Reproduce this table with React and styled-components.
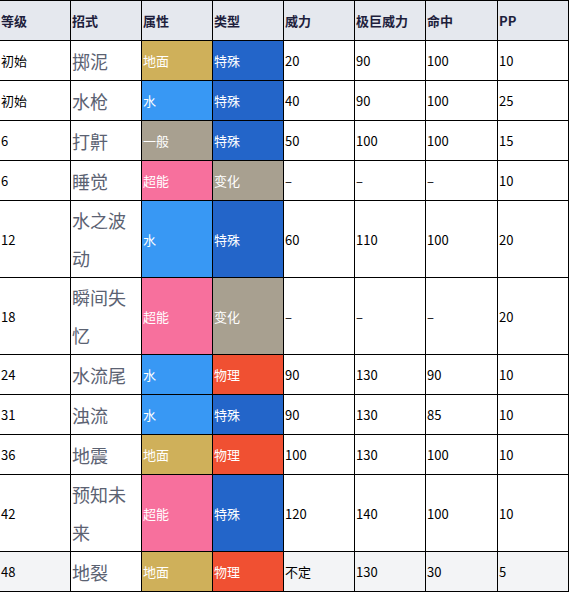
import React from 'react';
import styled, { createGlobalStyle } from 'styled-components';

const GlobalStyle = createGlobalStyle`
  html, body {
    margin: 0;
    padding: 0;
    background: #fff;
  }
  body {
    font-family: "Noto Sans CJK SC", "Noto Sans", sans-serif;
    overflow: hidden;
  }
`;

const TYPE_COLORS = {
  地面: '#cfb05a',
  水: '#3898f4',
  一般: '#a8a090',
  超能: '#f7709d',
  特殊: '#2365c9',
  变化: '#a8a090',
  物理: '#f05032',
};

const moves = [
  ['初始', '掷泥', '地面', '特殊', '20', '90', '100', '10'],
  ['初始', '水枪', '水', '特殊', '40', '90', '100', '25'],
  ['6', '打鼾', '一般', '特殊', '50', '100', '100', '15'],
  ['6', '睡觉', '超能', '变化', '–', '–', '–', '10'],
  ['12', '水之波动', '水', '特殊', '60', '110', '100', '20'],
  ['18', '瞬间失忆', '超能', '变化', '–', '–', '–', '20'],
  ['24', '水流尾', '水', '物理', '90', '130', '90', '10'],
  ['31', '浊流', '水', '特殊', '90', '130', '85', '10'],
  ['36', '地震', '地面', '物理', '100', '130', '100', '10'],
  ['42', '预知未来', '超能', '特殊', '120', '140', '100', '10'],
  ['48', '地裂', '地面', '物理', '不定', '130', '30', '5'],
];

const headers = ['等级', '招式', '属性', '类型', '威力', '极巨威力', '命中', 'PP'];
const widths = [71, 71, 71, 71, 71, 71, 72, 71];

const MoveTable = styled.table`
  border-collapse: collapse;
  table-layout: fixed;
  width: 570px;
  margin-left: -1px;
  border: 1px solid #000;
`;

const HeadCell = styled.th`
  height: 39px;
  padding: 0 1px;
  border: 1px solid #000;
  background: #e5e8ee;
  color: #1e1e3c;
  font-size: 13px;
  font-weight: 700;
  text-align: left;
  vertical-align: middle;
`;

const Cell = styled.td`
  height: 39px;
  padding: 0 1px;
  border: 1px solid #000;
  background: ${(p) => (p.$muted ? '#f3f4f6' : '#fff')};
  color: #000;
  font-size: 13px;
  text-align: left;
  vertical-align: middle;
`;

const NameCell = styled(Cell)`
  background: #fff;
  color: #5b6272;
  font-size: 18px;
  line-height: 38px;
`;

const TypeCell = styled(Cell)`
  background: ${(p) => p.$color};
  color: #fff;
`;

export default function App() {
  return (
    <>
      <GlobalStyle />
      <MoveTable>
        <colgroup>
          {widths.map((w, i) => (
            <col key={i} style={{ width: w }} />
          ))}
        </colgroup>
        <thead>
          <tr>
            {headers.map((h) => (
              <HeadCell key={h}>{h}</HeadCell>
            ))}
          </tr>
        </thead>
        <tbody>
          {moves.map((m, i) => {
            const muted = i === moves.length - 1;
            const [level, name, attr, kind, power, max, acc, pp] = m;
            return (
              <tr key={name}>
                <Cell $muted={muted}>{level}</Cell>
                <NameCell>{name}</NameCell>
                <TypeCell $color={TYPE_COLORS[attr]}>{attr}</TypeCell>
                <TypeCell $color={TYPE_COLORS[kind]}>{kind}</TypeCell>
                <Cell $muted={muted}>{power}</Cell>
                <Cell $muted={muted}>{max}</Cell>
                <Cell $muted={muted}>{acc}</Cell>
                <Cell $muted={muted}>{pp}</Cell>
              </tr>
            );
          })}
        </tbody>
      </MoveTable>
    </>
  );
}
